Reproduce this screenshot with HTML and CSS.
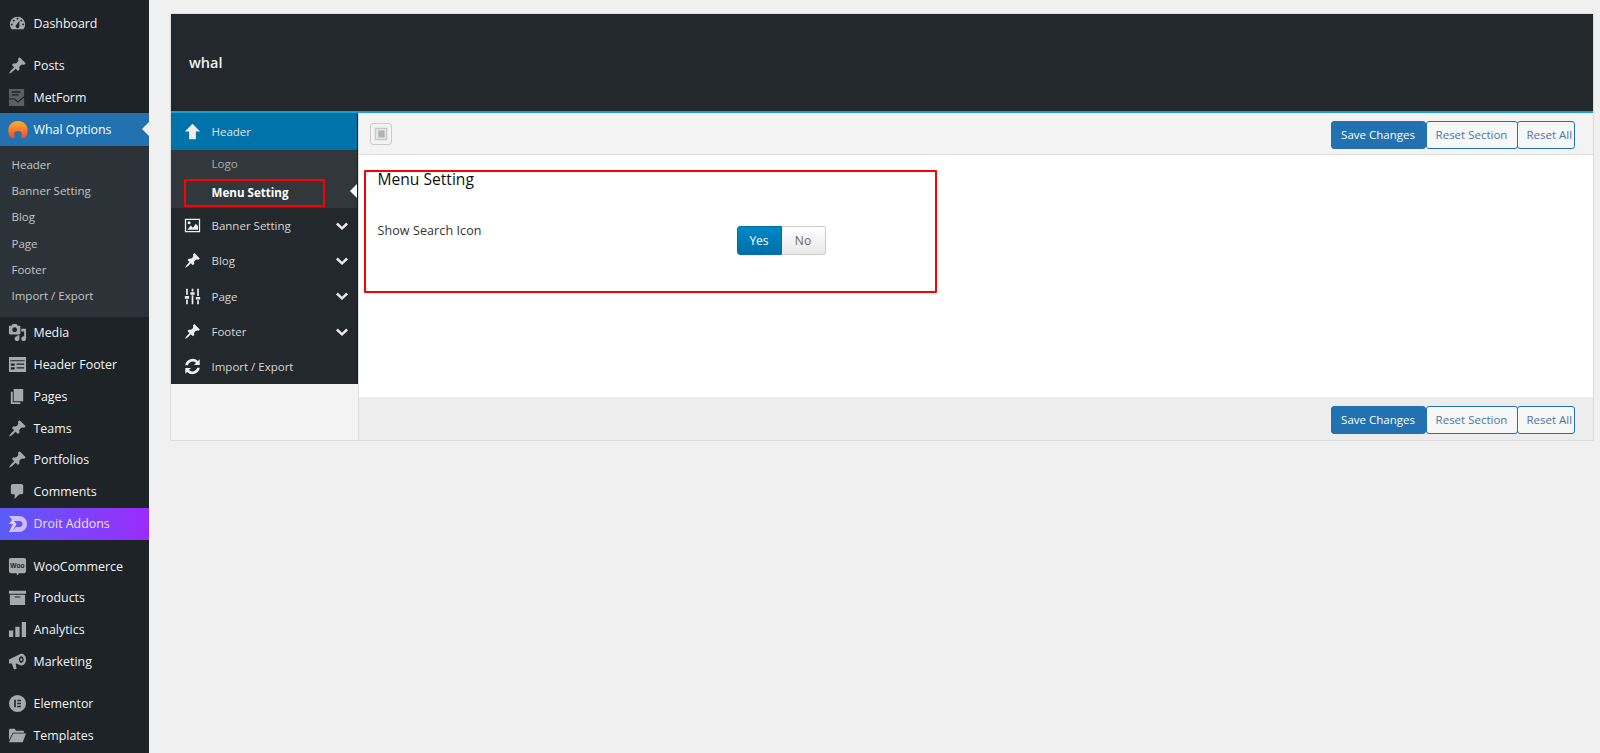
FILE: index.html
```html
<!DOCTYPE html>
<html lang="en">
<head>
<meta charset="utf-8">
<title>Whal Options</title>
<link rel="stylesheet" href="styles.css">
</head>
<body>
<svg class="defs" width="0" height="0" aria-hidden="true">
  <defs>
    <linearGradient id="whal-g" x1="0" y1="0" x2="0" y2="1"><stop offset="0" stop-color="#fdb02e"/><stop offset=".55" stop-color="#f5792f"/><stop offset="1" stop-color="#ea4d2c"/></linearGradient>
  </defs>
  <symbol id="i-dash" viewBox="0 0 20 20"><path fill-rule="evenodd" d="M3.760 16h12.480c1.100-1.370 1.760-3.110 1.760-5 0-4.420-3.580-8-8-8s-8 3.580-8 8c0 1.890.66 3.630 1.760 5zM10 4c.55 0 1 .45 1 1s-.45 1-1 1-1-.45-1-1 .45-1 1-1zM6 6c.55 0 1 .45 1 1s-.45 1-1 1-1-.45-1-1 .45-1 1-1zm8 0c.55 0 1 .45 1 1s-.45 1-1 1-1-.45-1-1 .45-1 1-1zm-5.370 5.550L12 7v6c0 1.100-.9 2-2 2s-2-.9-2-2c0-.57.24-1.080.63-1.450zM4 10c.55 0 1 .45 1 1s-.45 1-1 1-1-.45-1-1 .45-1 1-1zm12 0c.55 0 1 .45 1 1s-.45 1-1 1-1-.45-1-1 .45-1 1-1z"/></symbol>
  <symbol id="i-pin" viewBox="0 0 20 20"><path d="M10.440 3.020l1.820-1.820 6.360 6.350-1.830 1.820c-1.050-.68-2.480-.57-3.410.36l-.75.75c-.92.93-1.040 2.350-.35 3.410l-1.830 1.820-2.410-2.410-2.800 2.790c-.42.42-3.380 2.710-3.800 2.290s1.860-3.390 2.280-3.810l2.790-2.790L4.100 9.360l1.830-1.820c1.050.69 2.480.57 3.400-.36l.75-.75c.93-.92 1.050-2.350.36-3.410z"/></symbol>
  <symbol id="i-metform" viewBox="0 0 20 20"><path fill-rule="evenodd" d="M1 1h16v7.500l-6.500 5.500L7 11H1zM4 3.500v1.500h9V3.500zM4 6.500V8h7V6.500zM1 12h5.500l4 3.500L17 10v9H1z"/></symbol>
  <symbol id="i-media" viewBox="0 0 20 20"><path fill-rule="evenodd" d="M13 11V4c0-.55-.45-1-1-1h-1.670L9 1H5L3.670 3H2c-.55 0-1 .45-1 1v7c0 .55.45 1 1 1h10c.55 0 1-.45 1-1zM7 4.500c1.380 0 2.500 1.120 2.500 2.500S8.380 9.500 7 9.500 4.500 8.380 4.500 7 5.620 4.500 7 4.500zM14 6h5v10.500c0 1.380-1.120 2.500-2.500 2.500S14 17.880 14 16.500s1.120-2.500 2.500-2.500c.17 0 .34.02.5.05V9h-3V6zm-4 8.050V13h2v3.500c0 1.380-1.120 2.500-2.500 2.500S7 17.880 7 16.500 8.120 14 9.500 14c.17 0 .34.02.5.05z"/></symbol>
  <symbol id="i-hf" viewBox="0 0 20 20"><path fill-rule="evenodd" d="M1 2h18v16H1zM2.500 5.500v1.200h15V5.500zM3 9v2.200h4V9zM9 9v1.200h8V9zM3 13v2.200h4V13zM9 13v1.200h8V13z"/></symbol>
  <symbol id="i-pages" viewBox="0 0 20 20"><path d="M6 15V2h10v13H6zm-1 1h8v2H3V5h2v11z"/></symbol>
  <symbol id="i-comment" viewBox="0 0 20 20"><path d="M5 2h9c1.100 0 2 .9 2 2v7c0 1.100-.9 2-2 2h-2l-5 5v-5H5c-1.100 0-2-.9-2-2V4c0-1.100.9-2 2-2z"/></symbol>
  <symbol id="i-droit" viewBox="0 0 20 20"><path d="M1 2h9.500c5 0 8.500 3.500 8.500 8s-3.500 8-8.500 8H3.500L8 13h3.500c1.700 0 3-1.300 3-3s-1.300-3-3-3H5z" fill="#cdbcff"/><path d="M1 10l3.500-4.500L8.500 10 4 18H1l4-8z" fill="#e7defc" opacity=".9"/></symbol>
  <symbol id="i-box" viewBox="0 0 20 20"><path fill-rule="evenodd" d="M1 3h18v3H1zM2 7h16v11H2zM7 9v1h6V9z"/></symbol>
  <symbol id="i-bars" viewBox="0 0 20 20"><path d="M1 11h4.500v7H1zM7.700 7h4.500v11H7.700zM14.500 2H19v16h-4.500z"/></symbol>
  <symbol id="i-mega" viewBox="0 0 20 20"><path fill-rule="evenodd" d="M1 8l12-6c3-1 6 2 6 6s-3 7-6 6l-4-2-1 .5 1 4.500c0 1-2 1.500-3 .5l-2-5.500H1zM14 4.500c-1.500 0-2.500 1.700-2.500 3.500s1 3.500 2.500 3.500 2.500-1.700 2.500-3.500-1-3.500-2.500-3.500zM14 6.500c.8 0 1.200.7 1.200 1.500s-.4 1.500-1.200 1.500-1.200-.7-1.200-1.500.4-1.500 1.200-1.500z"/></symbol>
  <symbol id="i-el" viewBox="0 0 20 20"><path fill-rule="evenodd" d="M10 1a9 9 0 1 0 0 18 9 9 0 0 0 0-18zM6.500 6h1.700v8H6.500zM9.800 6h3.700v1.600H9.800zM9.800 9.200h3.700v1.600H9.800zM9.800 12.400h3.700V14H9.800z"/></symbol>
  <symbol id="i-folder" viewBox="0 0 20 20"><path d="M1 4l1-1h5l1.500 2H16l1 1v1H5L1 15zM5.500 8H19l-3.500 9H1z"/></symbol>
  <symbol id="p-up" viewBox="0 0 20 20"><path d="M10 1l9 9h-5v9H6v-9H1z"/></symbol>
  <symbol id="p-img" viewBox="0 0 20 20"><path fill-rule="evenodd" d="M1 2h18v16H1zM2.500 3.500v13h15v-13zM4 15l4-5 2.500 2.500L14 8l2.500 3v4zM6 5a1.800 1.800 0 1 1 0 3.600A1.800 1.800 0 0 1 6 5z"/></symbol>
  <symbol id="p-sliders" viewBox="0 0 20 20"><path d="M2.500 1h2v7h-2zM2.500 13.500h2V19h-2zM1 9.500h5v3H1zM9 1h2v3h-2zM9 8.500h2V19H9zM7.500 5h5v2.800h-5zM15.500 1h2v8.500h-2zM15.500 14.500h2V19h-2zM14 10.500h5v3h-5z"/></symbol>
  <symbol id="p-sync" viewBox="0 0 20 20"><path d="M18.500 1.500v6.800h-6.800l2.500-2.500A5.800 5.800 0 0 0 4.500 8.500H1.400a8.800 8.800 0 0 1 14.900-4.900zM1.500 18.500v-6.800h6.800l-2.500 2.500a5.800 5.800 0 0 0 9.700-2.700h3.100a8.800 8.800 0 0 1-14.900 4.900z"/></symbol>
  <symbol id="p-chev" viewBox="0 0 12 8"><path d="M1.800.6L6 4.800 10.200.6 12 2.400 6 8 0 2.400z"/></symbol>
</svg>

<div class="shell">
  <nav class="adminbar">
    <a class="item gap-b gap-first"><svg class="ic"><use href="#i-dash"/></svg>Dashboard</a>
    <a class="item"><svg class="ic"><use href="#i-pin"/></svg>Posts</a>
    <a class="item"><svg class="ic ic-dim"><use href="#i-metform"/></svg>MetForm</a>
    <a class="item current">
      <svg class="ic ic-big" viewBox="0 0 20 20"><path d="M10 1c5.700 0 9.700 4 9.700 9.500 0 3-1 5.500-2.700 7.500h-3.500c-.7-1.500.3-2.700.3-4.200 0-1.500-1.700-2.800-3.800-2.800s-3.800 1.300-3.800 2.800c0 1.500 1 2.700.3 4.200H3c-1.700-2-2.700-4.500-2.700-7.500C.3 5 4.300 1 10 1z" fill="url(#whal-g)"/></svg>
      Whal Options
    </a>
    <ul class="subnav">
      <li>Header</li><li>Banner Setting</li><li>Blog</li><li>Page</li><li>Footer</li><li>Import / Export</li>
    </ul>
    <a class="item"><svg class="ic"><use href="#i-media"/></svg>Media</a>
    <a class="item"><svg class="ic"><use href="#i-hf"/></svg>Header Footer</a>
    <a class="item"><svg class="ic"><use href="#i-pages"/></svg>Pages</a>
    <a class="item"><svg class="ic"><use href="#i-pin"/></svg>Teams</a>
    <a class="item"><svg class="ic"><use href="#i-pin"/></svg>Portfolios</a>
    <a class="item"><svg class="ic"><use href="#i-comment"/></svg>Comments</a>
    <a class="item droit gap-b"><svg class="ic ic-big"><use href="#i-droit"/></svg>Droit Addons</a>
    <a class="item"><svg class="ic" viewBox="0 0 20 20"><path d="M3 1h14c1.100 0 2 .9 2 2v12c0 1.100-.9 2-2 2h-5.500L10 19.500 9 17H3c-1.100 0-2-.9-2-2V3c0-1.100.9-2 2-2z"/><text x="10" y="11.500" class="woo-text" text-anchor="middle">Woo</text></svg>WooCommerce</a>
    <a class="item"><svg class="ic"><use href="#i-box"/></svg>Products</a>
    <a class="item"><svg class="ic"><use href="#i-bars"/></svg>Analytics</a>
    <a class="item gap-b"><svg class="ic"><use href="#i-mega"/></svg>Marketing</a>
    <a class="item"><svg class="ic"><use href="#i-el"/></svg>Elementor</a>
    <a class="item"><svg class="ic"><use href="#i-folder"/></svg>Templates</a>
  </nav>

  <main class="workspace">
    <section class="panel">
      <header class="brand"><h1>whal</h1></header>
      <div class="panel-body">
        <aside class="tabs">
          <div class="tabs-dark">
            <a class="tab tab-active"><svg class="tic"><use href="#p-up"/></svg><span>Header</span></a>
            <ul class="tab-sub">
              <li>Logo</li>
              <li class="tab-sub-on">Menu Setting</li>
            </ul>
            <a class="tab"><svg class="tic"><use href="#p-img"/></svg><span>Banner Setting</span><svg class="chev"><use href="#p-chev"/></svg></a>
            <a class="tab"><svg class="tic"><use href="#i-pin"/></svg><span>Blog</span><svg class="chev"><use href="#p-chev"/></svg></a>
            <a class="tab"><svg class="tic"><use href="#p-sliders"/></svg><span>Page</span><svg class="chev"><use href="#p-chev"/></svg></a>
            <a class="tab"><svg class="tic"><use href="#i-pin"/></svg><span>Footer</span><svg class="chev"><use href="#p-chev"/></svg></a>
            <a class="tab"><svg class="tic"><use href="#p-sync"/></svg><span>Import / Export</span></a>
          </div>
        </aside>
        <div class="content">
          <div class="bar bar-top">
            <button class="expand" aria-label="Expand"><svg viewBox="0 0 20 20"><path d="M3 3h14v14H3z" fill="#c9c9c9"/><path d="M4.500 4.500h11v11h-11z" fill="#e6e6e6"/><path d="M7 6h7v8H7z" fill="#b4b4b4"/></svg></button>
            <div class="actions">
              <button class="btn primary">Save Changes</button>
              <button class="btn ghost">Reset Section</button>
              <button class="btn ghost">Reset All</button>
            </div>
          </div>
          <div class="form">
            <h2>Menu Setting</h2>
            <div class="field">
              <label>Show Search Icon</label>
              <div class="toggle"><span class="yes">Yes</span><span class="no">No</span></div>
            </div>
          </div>
          <div class="bar bar-bottom">
            <div class="actions">
              <button class="btn primary">Save Changes</button>
              <button class="btn ghost">Reset Section</button>
              <button class="btn ghost">Reset All</button>
            </div>
          </div>
        </div>
      </div>
    </section>
  </main>
</div>
<div class="mark mark-tab"></div>
<div class="mark mark-form"></div>
</body>
</html>
```
FILE: styles.css
```css
* { box-sizing: border-box; }
html, body { margin: 0; height: 753px; overflow: hidden; }
body { background: #f0f0f1; font-family: "Open Sans", "Noto Sans", sans-serif; font-size: 12.5px; color: #333; position: relative; }
.defs { position: absolute; }
ul { list-style: none; margin: 0; padding: 0; }
.shell { display: flex; height: 753px; }

.adminbar { width: 149px; flex: none; background: #1d2327; padding-top: 8px; color: #f0f0f1; font-size: 12.4px; overflow: hidden; }
.item { display: flex; align-items: center; height: 31.8px; padding-left: 8px; gap: 6.5px; color: #f4f4f4; position: relative; white-space: nowrap; }
.gap-b { margin-bottom: 10px; }
.gap-first { margin-bottom: 10px; }
.ic { width: 19px; height: 19px; fill: #a7aaad; flex: none; }
.ic-dim { fill: #5a5f64; }
.ic-big { width: 20px; height: 20px; margin: 0 -0.5px; }
.woo-text { font-size: 7px; font-weight: 700; fill: #1d2327; font-family: "Liberation Sans", sans-serif; }
.current { background: #2271b1; color: #fff; height: 33px; }
.current::after { content: ""; position: absolute; right: 0; top: 9px; border: 7.500px solid transparent; border-right-color: #f0f0f1; border-left-width: 0; }
.droit { background: linear-gradient(90deg, #5b5cf6, #9b2cfb); color: #e9e2ff; height: 32.500px; }
.subnav { background: #2c3338; color: #c3c4c7; font-size: 11.500px; padding: 5px 0 7px 11.500px; height: 170.500px; }
.subnav li { height: 26.200px; display: flex; align-items: center; }

.workspace { flex: 1; padding: 13px 6px 0 20.500px; }
.panel { border: 1px solid #dcdcdc; background: #f3f3f3; height: 428px; display: flex; flex-direction: column; }
.brand { height: 99px; background: #23282d; border-bottom: 2px solid #1d9dd2; flex: none; display: flex; align-items: center; padding-left: 18.500px; }
.brand h1 { margin: 0; font-size: 14.500px; font-weight: 600; color: #f1f1f1; }
.panel-body { flex: 1; display: flex; min-height: 0; }

.tabs { width: 188px; flex: none; border-right: 1px solid #dedede; background: #f3f3f3; }
.tabs-dark { background: #23282d; color: #d4d4d4; border-right: 1px solid #1c1f22; }
.tab { display: flex; align-items: center; height: 35.300px; font-size: 11.500px; color: #d6d6d6; padding-left: 13px; white-space: nowrap; }
.tab span { margin-left: 11px; flex: 1; }
.tab-active { height: 37px; background: #0073aa; color: #e2e2e2; }
.tic { width: 17px; height: 17px; fill: #eee; flex: none; }
.chev { width: 12px; height: 8px; fill: #e8e8e8; margin-right: 9px; flex: none; }
.tab-sub { background: #32373c; height: 58px; padding: 0 0 0 41px; font-size: 11.600px; color: #a9abad; position: relative; }
.tab-sub li { height: 27px; display: flex; align-items: center; }
.tab-sub li.tab-sub-on { height: 31px; }
.tab-sub-on { color: #fff; font-weight: 700; }
.tab-sub::after { content: ""; position: absolute; right: 0; top: 34px; border: 7px solid transparent; border-right-color: #fff; border-left-width: 0; }

.content { flex: 1; min-width: 0; display: flex; flex-direction: column; background: #fff; }
.bar { display: flex; align-items: center; justify-content: space-between; flex: none; padding: 0 18.500px 0 11px; }
.bar-top { height: 42px; padding-top: 2px; background: #f3f3f3; border-bottom: 1px solid #dcdcdc; }
.bar-bottom { height: 43px; padding-top: 2px; background: #ededed; justify-content: flex-end; }
.expand { width: 22px; height: 22px; padding: 1px; border: 1px solid #ccc; border-radius: 3px; background: #f4f4f4; display: flex; margin-top: -2px; }
.expand svg { width: 100%; height: 100%; }
.actions { display: flex; }
.btn { height: 28px; border-radius: 3px; font: 11.500px "Open Sans", "Noto Sans", sans-serif; padding: 0; }
.primary { width: 95px; background: #2271b1; border: 1px solid #2271b1; color: #fff; }
.ghost { background: #f6f7f7; border: 1px solid #2271b1; color: #4f74a8; width: 92px; }
.ghost:last-child { width: 58px; margin-left: -1px; padding-left: 9px; text-align: left; }

.form { flex: 1; padding: 14px 0 0 19px; color: #23282d; }
.form h2 { margin: 0; font-size: 15.600px; font-weight: 500; color: #111; line-height: 20px; }
.field { display: flex; margin-top: 33px; align-items: flex-start; }
.field label { width: 359px; font-size: 12.500px; letter-spacing: .1px; line-height: 18px; color: #333; }
.toggle { display: flex; height: 29px; width: 89px; margin-top: 3.500px; font-size: 12px; }
.yes { width: 45px; display: flex; align-items: center; justify-content: center; background: linear-gradient(#0088c6, #006ea8); color: #fff; border-radius: 3px 0 0 3px; border: 1px solid #0070a8; }
.no { flex: 1; display: flex; align-items: center; justify-content: center; background: linear-gradient(#fff, #e8e8e8); color: #666; border: 1px solid #ccc; border-left: 0; border-radius: 0 3px 3px 0; }

.mark { position: absolute; border: 2.500px solid #f00; border-radius: 1px; pointer-events: none; }
.mark-tab { left: 184px; top: 179px; width: 141px; height: 28px; }
.mark-form { left: 364px; top: 170px; width: 573px; height: 123px; }
```
